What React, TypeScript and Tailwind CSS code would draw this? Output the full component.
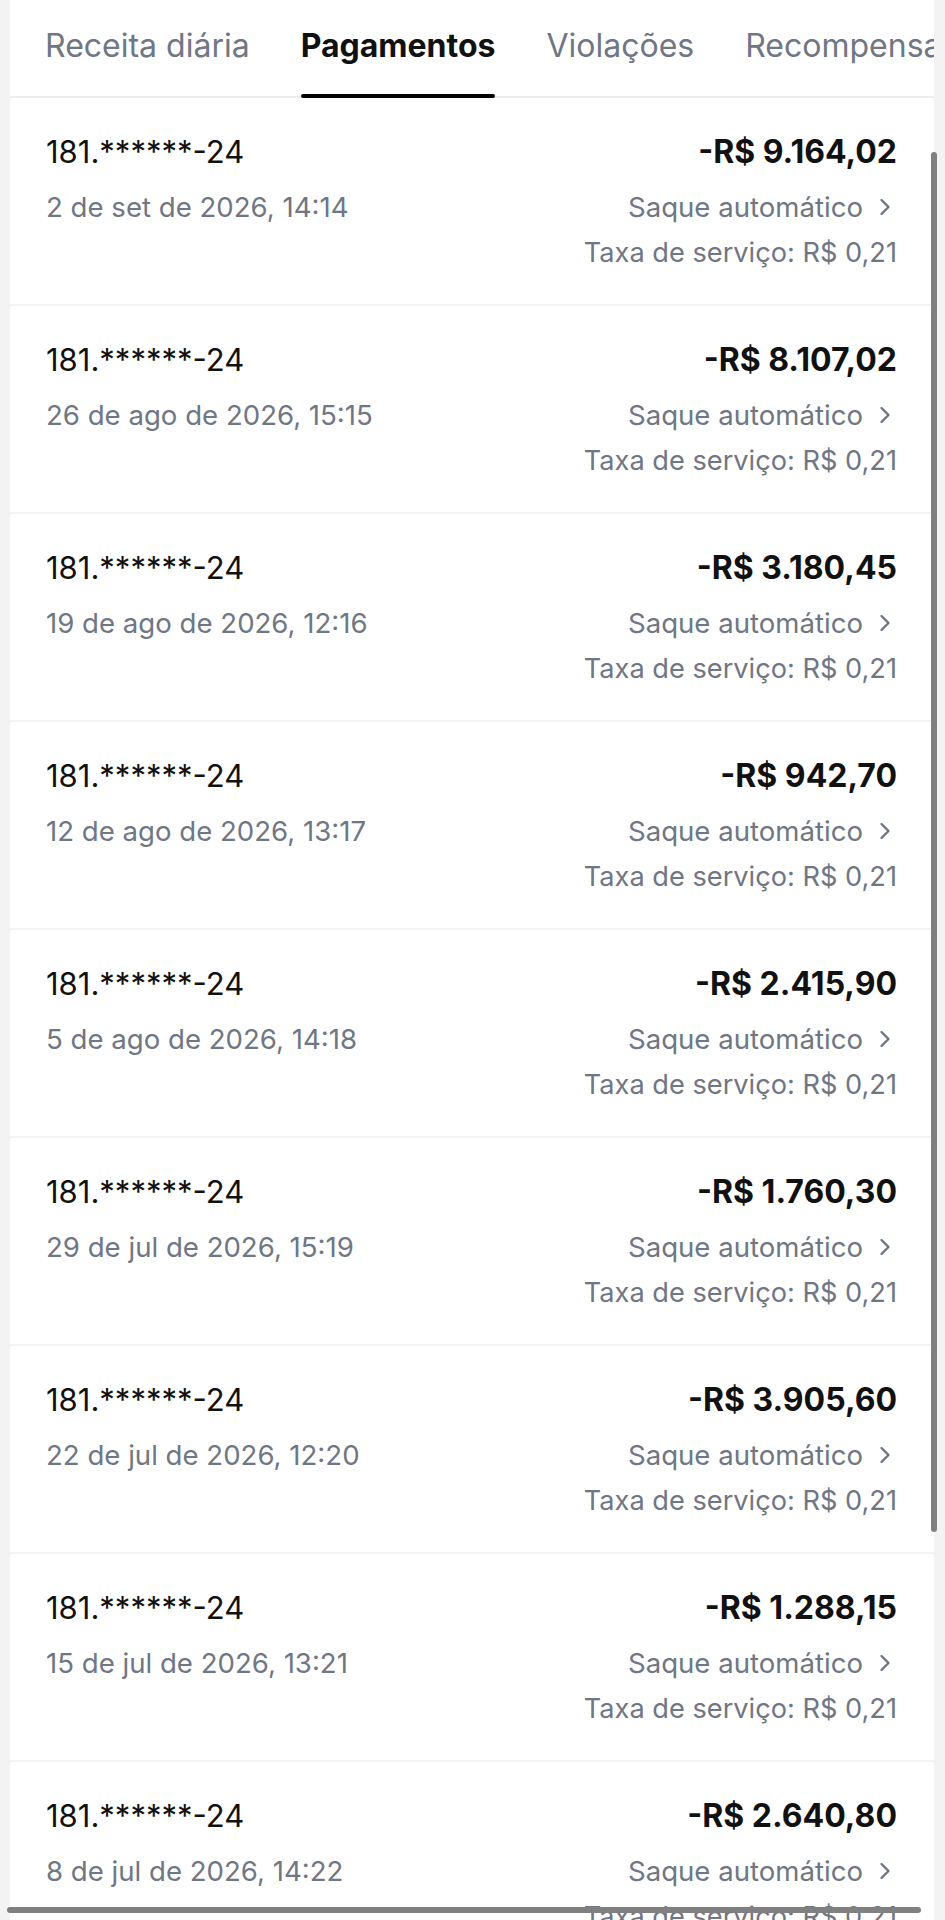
import React from 'react';

type Payout = {
  account: string;
  date: string;
  amount: string;
};

const payouts: Payout[] = [
  { account: '181.******-24', date: '2 de set de 2026, 14:14', amount: '-R$ 9.164,02' },
  { account: '181.******-24', date: '26 de ago de 2026, 15:15', amount: '-R$ 8.107,02' },
  { account: '181.******-24', date: '19 de ago de 2026, 12:16', amount: '-R$ 3.180,45' },
  { account: '181.******-24', date: '12 de ago de 2026, 13:17', amount: '-R$ 942,70' },
  { account: '181.******-24', date: '5 de ago de 2026, 14:18', amount: '-R$ 2.415,90' },
  { account: '181.******-24', date: '29 de jul de 2026, 15:19', amount: '-R$ 1.760,30' },
  { account: '181.******-24', date: '22 de jul de 2026, 12:20', amount: '-R$ 3.905,60' },
  { account: '181.******-24', date: '15 de jul de 2026, 13:21', amount: '-R$ 1.288,15' },
  { account: '181.******-24', date: '8 de jul de 2026, 14:22', amount: '-R$ 2.640,80' },
];

const tabs = ['Receita diária', 'Pagamentos', 'Violações', 'Recompensas'];

function Chevron() {
  return (
    <svg width="12" height="18" viewBox="0 0 12 18" className="ml-[16px] mr-[6px] shrink-0" fill="none">
      <path d="M2.5 2 L9.5 9 L2.5 16" stroke="#6f7684" strokeWidth="2.4" strokeLinecap="round" strokeLinejoin="round" />
    </svg>
  );
}

function PayoutRow({ payout }: { payout: Payout }) {
  return (
    <div className="flex justify-between border-b-2 border-[#f3f3f4] pl-[36px] pr-[37px] pt-[34px] pb-[33px]">
      <div className="flex flex-col">
        <span className="text-[31px] leading-[40px] text-[#111]">{payout.account}</span>
        <span className="mt-[17px] text-[27.6px] leading-[36px] text-[#6f7684]">{payout.date}</span>
      </div>
      <div className="flex flex-col items-end">
        <span className="text-[32px] leading-[40px] font-bold text-[#111]">{payout.amount}</span>
        <span className="mt-[17px] flex items-center text-[27.6px] leading-[36px] text-[#6f7684]">
          Saque automático
          <Chevron />
        </span>
        <span className="mt-[10px] text-[27.2px] leading-[36px] text-[#6f7684]">Taxa de serviço: R$ 0,21</span>
      </div>
    </div>
  );
}

export default function App() {
  return (
    <div
      className="relative h-[1920px] w-[945px] overflow-hidden bg-[#f3f3f3]"
      style={{ fontFamily: 'Inter, "Noto Sans", sans-serif' }}
    >
      <div className="ml-[10px] h-full w-[924px] overflow-hidden bg-white">
        {/* Tabs */}
        <div className="flex h-[98px] gap-[51px] whitespace-nowrap border-b-2 border-[#ececec] pl-[35px]">
          {tabs.map((tab) => {
            const active = tab === 'Pagamentos';
            return (
              <div key={tab} className="relative pt-[26px]">
                <span
                  className={
                    active
                      ? 'text-[32px] leading-[40px] font-bold text-[#111]'
                      : 'text-[32px] leading-[40px] text-[#6f7684]'
                  }
                >
                  {tab}
                </span>
                {active && (
                  <div className="absolute bottom-[-2px] left-0 right-0 h-[4px] rounded-full bg-black" />
                )}
              </div>
            );
          })}
        </div>

        {/* Payout list */}
        <div className="flex flex-col">
          {payouts.map((p, i) => (
            <PayoutRow key={i} payout={p} />
          ))}
        </div>
      </div>

      {/* scrollbars */}
      <div className="absolute left-[931px] top-[152px] h-[1380px] w-[6px] rounded-full bg-[#808080]" />
      <div className="absolute left-[7px] top-[1907px] h-[6px] w-[914px] rounded-full bg-[#808080]" />
    </div>
  );
}
